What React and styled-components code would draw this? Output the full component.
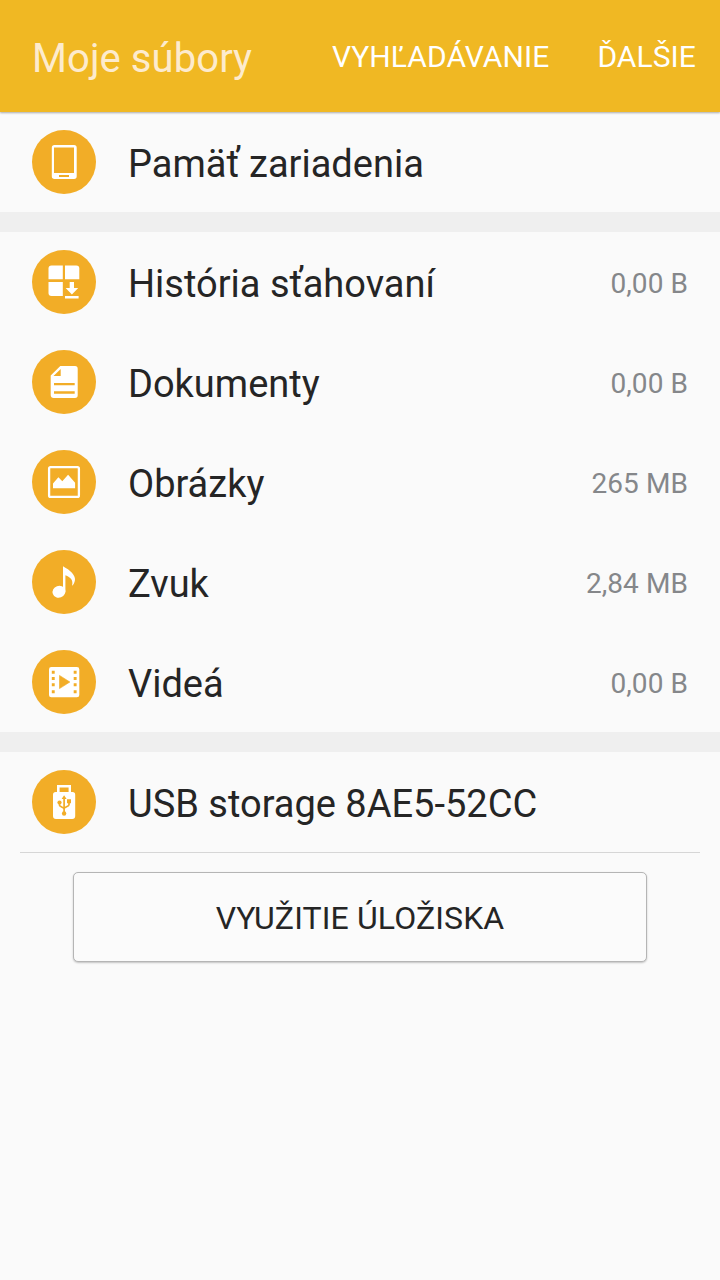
import React from 'react';
import styled, { createGlobalStyle } from 'styled-components';

const GlobalStyle = createGlobalStyle`
  body {
    margin: 0;
    background: #fafafa;
    font-family: Roboto, "Noto Sans", sans-serif;
  }
`;

const Page = styled.div`
  width: 720px;
  min-height: 1280px;
  background: #fafafa;
  color: #252525;
`;

const Header = styled.header`
  display: flex;
  align-items: center;
  justify-content: space-between;
  box-sizing: border-box;
  height: 112px;
  padding: 0 24px 0 32px;
  background: #f0b823;
  box-shadow: 0 1px 2px rgba(0, 0, 0, 0.32);
`;

const Title = styled.h1`
  margin: 0;
  padding-top: 5px;
  font-size: 40px;
  font-weight: 400;
  line-height: 48px;
  letter-spacing: 0.08px;
  color: #fdebcd;
`;

const Actions = styled.nav`
  display: flex;
  gap: 48px;
`;

const Action = styled.button`
  padding: 1px 0 0;
  border: 0;
  background: none;
  font: 400 30px/36px Roboto, "Noto Sans", sans-serif;
  letter-spacing: 0.08px;
  color: #fff;
`;

const Group = styled.ul`
  margin: 0;
  padding: 0;
  list-style: none;
  & + & {
    border-top: 20px solid #efefef;
  }
`;

const Row = styled.li`
  display: flex;
  align-items: center;
  height: 100px;
  padding: 0 32px;
`;

const Badge = styled.svg`
  flex: none;
  width: 64px;
  height: 64px;
  margin-right: 32px;
`;

const Label = styled.span`
  flex-grow: 1;
  padding-top: 4px;
  font-size: 38px;
  line-height: 46px;
  white-space: nowrap;
`;

const Size = styled.span`
  padding-top: 4px;
  font-size: 28px;
  line-height: 34px;
  letter-spacing: 0.08px;
  color: #85878a;
`;

const Footer = styled.footer`
  display: flex;
  justify-content: center;
  margin: 0 20px;
  padding-top: 19px;
  border-top: 1px solid #d6d6d6;
`;

const UsageButton = styled.button`
  box-sizing: border-box;
  width: 574px;
  height: 90px;
  padding: 2px 0 0;
  border: 1px solid #b5b5b5;
  border-radius: 5px;
  background: #fbfbfb;
  box-shadow: 0 1px 2px rgba(0, 0, 0, 0.22);
  font: 400 32px/38px Roboto, "Noto Sans", sans-serif;
  letter-spacing: 0.12px;
  color: #252525;
`;

const ORANGE = '#f2ad27';

const DeviceIcon = () => (
  <path
    fillRule="evenodd"
    fill="#fff"
    d="M22.5 15h19.5a2.7 2.7 0 0 1 2.7 2.7v28.6a2.7 2.7 0 0 1-2.7 2.7h-19.5a2.7 2.7 0 0 1-2.7-2.7v-28.6a2.7 2.7 0 0 1 2.7-2.7zM22 17.6v25.4h20v-25.4zM27 45v2h10v-2z"
  />
);

const DownloadIcon = () => (
  <g fill="#fff">
    <path d="M19.5 15.5h11.3v13.8h-14.3v-10.8a3 3 0 0 1 3-3z" />
    <path d="M33 15.500h11.300a3 3 0 0 1 3 3v10.800h-14.300z" />
    <path d="M16.500 32h14.300v14h-11.300a3 3 0 0 1-3-3z" />
    <path d="M37.700 32h4.300v6h4.200l-6.300 6.500-6.300-6.500h4.100zM33 46h13.600v2.600h-13.600z" />
  </g>
);

const DocumentIcon = () => (
  <>
    <path fill="#fff" d="M28.3 16h14.7a2.700 2.700 0 0 1 2.700 2.700v26.600a2.700 2.700 0 0 1-2.700 2.700h-21.300a3 3 0 0 1-3-3v-19.500z" />
    <path fill={ORANGE} d="M28.7 19v7h-7.2zM22 33h20.7v2.300h-20.700zM22 41.300h20.700v2.400h-20.700z" />
  </>
);

const ImageIcon = () => (
  <>
    <rect x="17.1" y="17.1" width="29.8" height="29.8" rx="1.5" fill="none" stroke="#fff" strokeWidth="2.3" />
    <path fill="#fff" d="M21 33.5l5.400-6.200 3.900 4 5.800-6.500 7 8v5.400h-22.100z" />
  </>
);

const SoundIcon = () => (
  <g fill="#fff">
    <ellipse cx="27" cy="41.700" rx="6.500" ry="5.900" transform="rotate(-20 27 41.700)" />
    <path d="M31 16.300c2 1.700 4.200 2 7 4.600 5.800 5 6.500 9.600 2.600 14.500-.5.200-.6-.1-.4-.6 1-4.200-1.500-7.700-6.800-9.500v16.400h-2.400z" />
  </g>
);

const VideoIcon = () => (
  <>
    <rect x="17" y="17" width="30.300" height="30.300" rx="2.400" fill="#fff" />
    <path fill={ORANGE} stroke={ORANGE} strokeWidth="0.600" strokeLinejoin="round" d="M27.500 25.400v13.200l10.400-6.600z" />
    {[22.2, 28.6, 34.8, 41.7].map((y) => (
      <path key={y} fill={ORANGE} d={`M19.800 ${y - 1.5}h2.900v3h-2.900zM41.700 ${y - 1.5}h2.900v3h-2.900z`} />
    ))}
  </>
);

const UsbIcon = () => (
  <>
    <path
      fillRule="evenodd"
      fill="#fff"
      d="M25 15h14v7h1.500a2.700 2.700 0 0 1 2.700 2.700v21.300a3 3 0 0 1-3 3h-16.200a3 3 0 0 1-3-3v-21.300a2.700 2.700 0 0 1 2.700-2.700h1.300zM27.600 17.600v4.400h9v-4.400z"
    />
    <path fill="none" stroke={ORANGE} strokeWidth="1.700" d="M32.100 43v-16M27.500 33v2.200c0 1.600 4.600 1.900 4.600 3.800M37 32v2.800c0 1.900-4.900 2.100-4.900 4" />
    <path fill={ORANGE} d="M32.100 25.200l2.500 3.900h-5zM35 29.300h4v4h-4z" />
    <circle cx="27.500" cy="32.500" r="2.100" fill={ORANGE} />
    <circle cx="32.100" cy="43.500" r="2.200" fill={ORANGE} />
  </>
);

const groups = [
  [{ label: 'Pamäť zariadenia', icon: DeviceIcon }],
  [
    { label: 'História sťahovaní', size: '0,00 B', icon: DownloadIcon },
    { label: 'Dokumenty', size: '0,00 B', icon: DocumentIcon },
    { label: 'Obrázky', size: '265 MB', icon: ImageIcon },
    { label: 'Zvuk', size: '2,84 MB', icon: SoundIcon },
    { label: 'Videá', size: '0,00 B', icon: VideoIcon },
  ],
  [{ label: 'USB storage 8AE5-52CC', icon: UsbIcon }],
];

const App = () => (
  <Page>
    <GlobalStyle />
    <Header>
      <Title>Moje súbory</Title>
      <Actions>
        <Action>VYHĽADÁVANIE</Action>
        <Action>ĎALŠIE</Action>
      </Actions>
    </Header>
    {groups.map((items) => (
      <Group key={items[0].label}>
        {items.map(({ label, size, icon: Icon }) => (
          <Row key={label}>
            <Badge viewBox="0 0 64 64">
              <circle cx="32" cy="32" r="32" fill={ORANGE} />
              <Icon />
            </Badge>
            <Label>{label}</Label>
            {size ? <Size>{size}</Size> : null}
          </Row>
        ))}
      </Group>
    ))}
    <Footer>
      <UsageButton>VYUŽITIE ÚLOŽISKA</UsageButton>
    </Footer>
  </Page>
);

export default App;
